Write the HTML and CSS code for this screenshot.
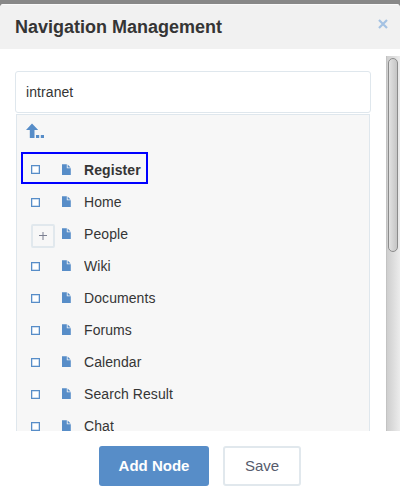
FILE: index.html
```
<!DOCTYPE html>
<html lang="en">
<head>
<meta charset="utf-8">
<title>Navigation Management</title>
<link rel="stylesheet" href="styles.css">
</head>
<body>
<svg class="defs" aria-hidden="true">
  <symbol id="file" viewBox="0 0 9 11"><path d="M0 .3h4.8v4h4V11H0z"/><path d="M5.6.5 8.6 3.5H5.6z"/></symbol>
</svg>
<div class="dialog">
  <header class="header">
    <h1 class="title">Navigation Management</h1>
    <svg class="close" viewBox="0 0 10 10"><path d="M1 1 9 9M9 1 1 9"/></svg>
  </header>
  <div class="body">
    <div class="content">
      <div class="field"><span class="value">intranet</span></div>
      <div class="tree">
        <div class="up">
          <svg width="20" height="17" viewBox="0 0 20 17"><path d="M6 .5 12.2 7H8.5V15H3.8V7H0zM10 12h3.2v3H10zM14.8 12H18v3h-3.2z"/></svg>
        </div>
        <ul class="list">
          <li class="row selected"><i class="box"></i><svg class="file"><use href="#file"/></svg><span class="label">Register</span></li>
          <li class="row"><i class="box"></i><svg class="file"><use href="#file"/></svg><span class="label">Home</span></li>
          <li class="row"><i class="expand"><svg viewBox="0 0 9 9"><path d="M4 0v8M0 3.5h8"/></svg></i><svg class="file"><use href="#file"/></svg><span class="label">People</span></li>
          <li class="row"><i class="box"></i><svg class="file"><use href="#file"/></svg><span class="label">Wiki</span></li>
          <li class="row"><i class="box"></i><svg class="file"><use href="#file"/></svg><span class="label">Documents</span></li>
          <li class="row"><i class="box"></i><svg class="file"><use href="#file"/></svg><span class="label">Forums</span></li>
          <li class="row"><i class="box"></i><svg class="file"><use href="#file"/></svg><span class="label">Calendar</span></li>
          <li class="row"><i class="box"></i><svg class="file"><use href="#file"/></svg><span class="label">Search Result</span></li>
          <li class="row"><i class="box"></i><svg class="file"><use href="#file"/></svg><span class="label">Chat</span></li>
        </ul>
      </div>
    </div>
    <div class="track"><div class="thumb"></div></div>
  </div>
  <footer class="footer">
    <button class="btn primary">Add Node</button>
    <button class="btn">Save</button>
  </footer>
</div>
</body>
</html>
```
FILE: styles.css
```
* { box-sizing: border-box; }
body {
  margin: 0;
  height: 501px;
  overflow: hidden;
  background: #888;
  color: #353535;
  font: 14px/20px "Liberation Sans", Arial, sans-serif;
}
.defs { display: none; }
.dialog {
  display: flex;
  flex-direction: column;
  height: 497px;
  margin-top: 4px;
  background: #fff;
  border-radius: 4px 4px 0 0;
  overflow: hidden;
}
.header {
  display: flex;
  justify-content: space-between;
  height: 45px;
  padding: 11px 12px 0 15px;
  background: #f1f1f1;
  border-top: 1px solid #fafafa;
}
.title { margin: 0; font-size: 18px; line-height: 22px; color: #353535; }
.close { width: 10px; height: 10px; margin-top: 3px; stroke: #a4c2e3; stroke-width: 2.2; fill: none; }
.body { display: flex; height: 382px; padding-top: 7px; overflow: hidden; }
.content { width: 386px; padding: 15px 15px 0; }
.field {
  height: 42px;
  padding: 10px;
  border: 1px solid #dfe7ed;
  border-radius: 3px;
}
.value, .label {
  display: inline-block;
  letter-spacing: 0.08px;
  transform: scaleY(1.07);
}
.tree {
  height: 330px;
  margin: 1px 1px 0;
  background: #f7f7f7;
  border: 1px solid #dfe7ed;
}
.up { height: 39px; padding: 8px 0 0 9px; fill: #578dc8; }
.up svg { display: block; }
.list { margin: 0; padding: 0; list-style: none; }
.row { display: flex; align-items: center; height: 32px; padding-left: 14px; }
.selected {
  width: 127px;
  margin: -2px 0 2px 4px;
  padding: 3px 0 0 8px;
  border: 2px solid #00f;
  font-weight: bold;
}
.box { width: 9px; height: 9px; margin-right: 22px; border: 1px solid #578dc8; background: #fff; box-shadow: inset 0 0 0 0.5px #9dbde0; }
.file { width: 9px; height: 11px; margin: 0 13px 1px 0; fill: #578dc8; }
.expand {
  display: flex;
  align-items: center;
  justify-content: center;
  width: 24px;
  height: 24px;
  margin: 4px 7px 0 0;
  border: 2px solid #e1e8ed;
  border-radius: 2px;
}
.expand svg { width: 9px; height: 9px; stroke: #7b7f91; stroke-width: 1; }
.track {
  width: 14px;
  padding: 2px;
  background: linear-gradient(90deg, #bcbcbc, #cfcfcf 10%, #ececec);
}
.thumb {
  width: 10px;
  height: 194px;
  border: 1px solid #8c8c8c;
  border-radius: 5px;
  background: linear-gradient(90deg, #e2e2e2, #c5c5c5);
}
.footer { display: flex; gap: 14px; padding: 15px 0 0 99px; }
.btn {
  width: 78px;
  height: 40px;
  padding: 0;
  border: 2px solid #e1e8ed;
  border-radius: 3px;
  background: #fff;
  color: #565b6c;
  font: 15px/20px "Liberation Sans", Arial, sans-serif;
}
.primary { width: 110px; border: 0; background: #578dc8; color: #fff; font-weight: bold; }
```
